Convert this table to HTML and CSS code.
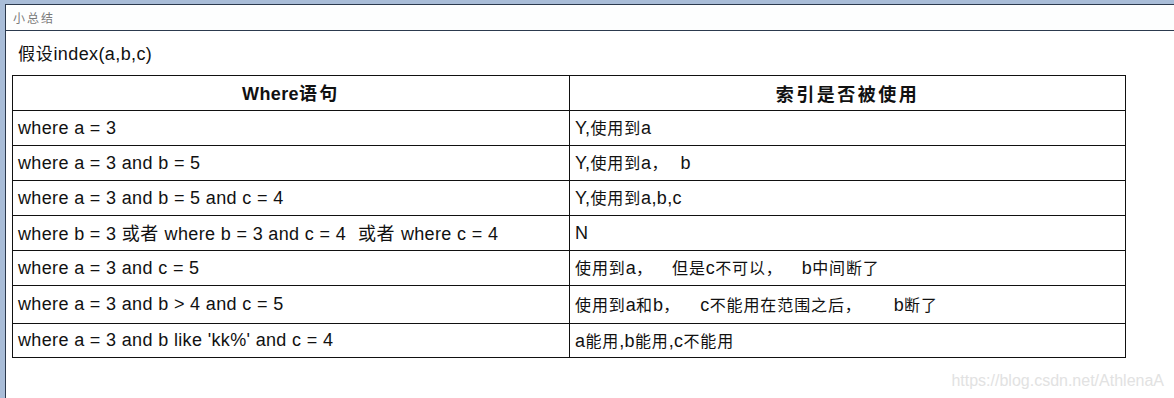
FILE: index.html
```html
<!DOCTYPE html>
<html lang="zh">
<head>
<meta charset="utf-8">
<title>小总结</title>
<link rel="stylesheet" href="styles.css">
</head>
<body>
<div class="frame">
  <div class="panel">
    <div class="titlebar">小总结</div>
    <div class="content">
      <p class="lead"><span class="zh-lead">假设</span>index(a,b,c)</p>
      <table class="grid">
        <colgroup><col class="c1"><col class="c2"></colgroup>
        <thead>
          <tr class="r-head"><th>Where<span class="zh-head">语句</span></th><th class="zh-head">索引是否被使用</th></tr>
        </thead>
        <tbody>
          <tr class="r"><td>where a = 3</td><td>Y,<span class="zh">使用到</span>a</td></tr>
          <tr class="r"><td>where a = 3 and b = 5</td><td>Y,<span class="zh">使用到</span>a<span class="zh">，</span><span class="gap gap-b"> </span>b</td></tr>
          <tr class="r"><td>where a = 3 and b = 5 and c = 4</td><td>Y,<span class="zh">使用到</span>a,b,c</td></tr>
          <tr class="r"><td>where b = 3 <span class="zh-l">或者</span><span class="gap gap-s"> </span>where b = 3 and c = 4<span class="gap gap-m"> </span><span class="zh-l">或者</span><span class="gap gap-s"> </span>where c = 4</td><td>N</td></tr>
          <tr class="r"><td>where a = 3 and c = 5</td><td><span class="zh">使用到</span>a<span class="zh">，</span><span class="gap gap-c"> </span><span class="zh">但是</span>c<span class="zh">不可以，</span><span class="gap gap-c"> </span>b<span class="zh">中间断了</span></td></tr>
          <tr class="r r-tall"><td>where a = 3 and b &gt; 4 and c = 5</td><td><span class="zh">使用到</span>a<span class="zh">和</span>b<span class="zh">，</span><span class="gap gap-d"> </span>c<span class="zh">不能用在范围之后，</span><span class="gap gap-l"> </span>b<span class="zh">断了</span></td></tr>
          <tr class="r r-last"><td>where a = 3 and b like 'kk%' and c = 4</td><td>a<span class="zh">能用</span>,b<span class="zh">能用</span>,c<span class="zh">不能用</span></td></tr>
        </tbody>
      </table>
      <div class="watermark">https://blog.csdn.net/AthlenaA</div>
    </div>
  </div>
</div>
</body>
</html>
```
FILE: styles.css
```css
html, body {
  margin: 0;
  padding: 0;
  background: #ffffff;
}
.frame {
  width: 1174px;
  height: 398px;
  box-sizing: border-box;
  background: #a9bdd8;
  padding: 4px 0 0 5px;
  overflow: hidden;
}
.panel {
  height: 100%;
  box-sizing: border-box;
  background: #ffffff;
  border-top: 1px solid #2c3a4e;
  border-left: 1px solid #2c3a4e;
}
.titlebar {
  height: 26px;
  box-sizing: border-box;
  border-bottom: 1px solid #2c3a4e;
  padding: 6px 0 0 7px;
  font-family: "Noto Sans CJK SC", sans-serif;
  font-size: 12px;
  line-height: 14px;
  letter-spacing: 2px;
  color: #7a7a7a;
  background: #fdfefe;
}
.content {
  padding: 0 0 0 6px;
  font-family: "Liberation Sans", "Noto Sans CJK SC", sans-serif;
  color: #111;
}
.lead {
  margin: 0;
  padding: 11px 0 0 6px;
  height: 32px;
  box-sizing: border-box;
  font-size: 18px;
  line-height: 21px;
  letter-spacing: 0.4px;
  color: #111;
}
.zh-lead {
  font-family: "Noto Sans CJK SC", sans-serif;
  font-size: 17px;
  letter-spacing: 0.7px;
}
.grid {
  border-collapse: collapse;
  width: 1113px;
  table-layout: fixed;
  margin-top: 12px;
  font-size: 18px;
  letter-spacing: 0.35px;
}
.c1 { width: 557px; }
.c2 { width: 556px; }
.grid th, .grid td {
  border: 1px solid #111;
  padding: 0 0 0 5px;
  text-align: left;
  vertical-align: middle;
  white-space: nowrap;
  line-height: 21px;
}
.grid th {
  text-align: center;
  font-weight: bold;
  padding: 0;
}
.zh {
  font-family: "Noto Sans CJK SC", sans-serif;
  font-size: 16px;
  letter-spacing: 0.9px;
}
.zh-l {
  font-family: "Noto Sans CJK SC", sans-serif;
  font-size: 18px;
  letter-spacing: 0.4px;
}
.gap {
  display: inline-block;
}
.gap-s { width: 6px; }
.gap-m { width: 12px; }
.gap-b { width: 12px; }
.gap-c { width: 19px; }
.gap-d { width: 20px; }
.gap-l { width: 32px; }
.zh-head {
  font-family: "Noto Sans CJK SC", sans-serif;
  font-size: 18px;
  letter-spacing: 2.5px;
}
.r-head { height: 35px; }
.r { height: 35px; }
.r-tall { height: 38px; }
.r-last { height: 34px; }
.watermark {
  margin: 14px 0 0 0;
  width: 1152px;
  text-align: right;
  font-family: "Liberation Sans", sans-serif;
  font-size: 16px;
  color: #e2e2e2;
}
```
